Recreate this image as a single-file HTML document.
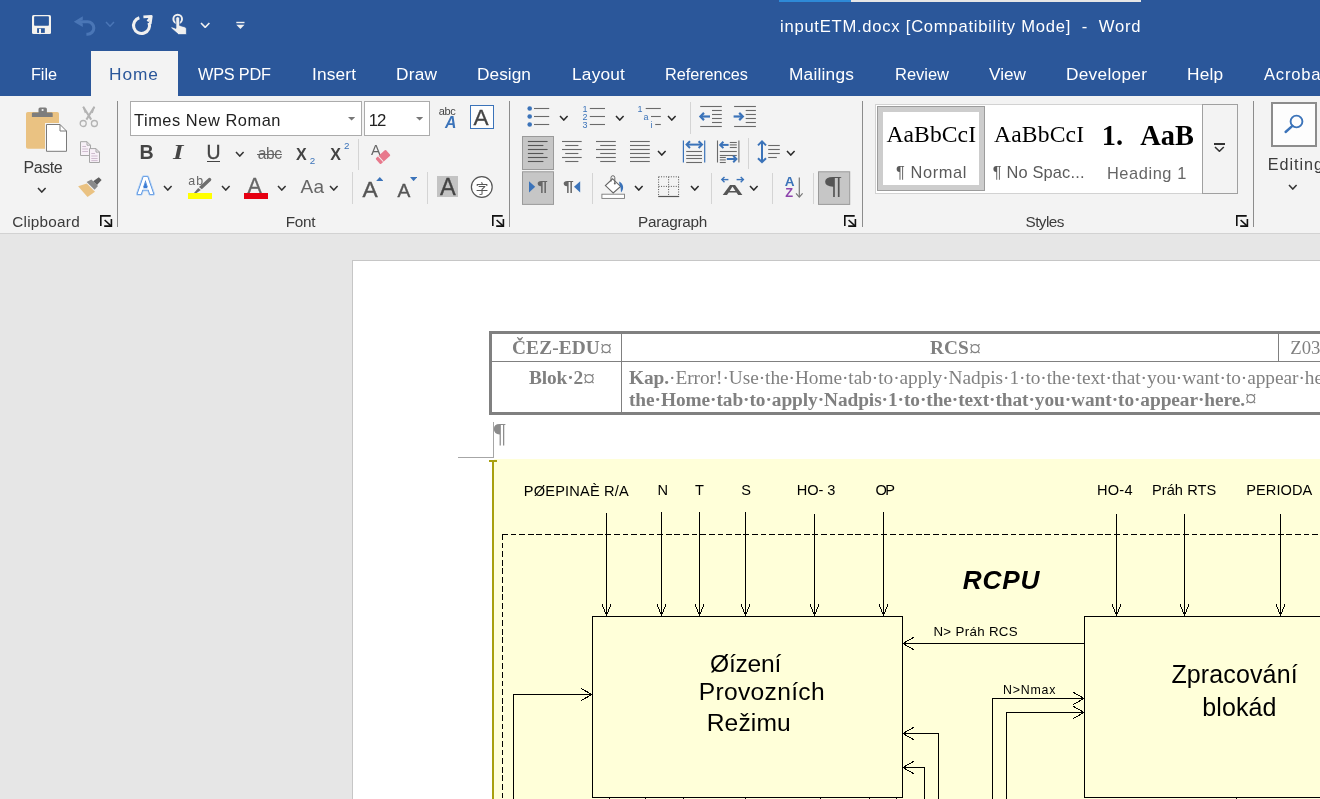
<!DOCTYPE html>
<html>
<head>
<meta charset="utf-8">
<title>inputETM.docx [Compatibility Mode] - Word</title>
<style>
*{box-sizing:border-box;margin:0;padding:0}
html,body{width:1320px;height:799px;overflow:hidden;background:#e6e6e6;font-family:"Liberation Sans",sans-serif;}
.abs{position:absolute}
#titlebar{position:absolute;left:0;top:0;width:1320px;height:96px;background:#2b579a}
#ribbon{position:absolute;left:0;top:96px;width:1320px;height:138px;background:#f3f3f3;border-bottom:1px solid #d2d2d2}
#doc{position:absolute;left:0;top:234px;width:1320px;height:565px;background:#e6e6e6;overflow:hidden}
.tab{position:absolute;top:48px;height:48px;line-height:50px;color:#fff;font-size:17.5px;white-space:nowrap;letter-spacing:-0.2px}
.glabel{position:absolute;top:212px;font-size:14.5px;color:#444;white-space:nowrap;letter-spacing:-0.1px}
.t{position:absolute;white-space:nowrap}
#page{position:absolute;left:352px;top:260px;width:980px;height:560px;background:#fff;border:1px solid #c6c6c6}
.ser{font-family:"Liberation Serif",serif}
</style>
</head>
<body>
<div id="titlebar"></div>
<div id="ribbon"></div>
<div id="doc"></div>
<div id="page"></div>
<div id="content" style="position:absolute;left:0;top:0;width:1320px;height:799px;will-change:transform">
<div class="abs" style="left:779px;top:0px;width:72px;height:2px;background:#2e8ad8;"></div>
<div class="abs" style="left:851px;top:0px;width:290px;height:2px;background:#e6e6e6;"></div>
<div class="t" style="left:780.0px;top:16px;font-size:16.6px;line-height:22px;color:#fff;letter-spacing:0.750px;white-space:pre;">inputETM.docx [Compatibility Mode]  -  Word</div>
<svg class="abs" style="left:31px;top:14px" width="22" height="22" viewBox="0 0 22 22"><rect x="1" y="0.9" width="19" height="19.2" rx="1.5" fill="#f4f2ee"/><rect x="3.1" y="2.2" width="14.8" height="9.6" rx="0.8" fill="#2b579a"/><rect x="6.1" y="14.2" width="7.7" height="4.7" fill="#2b579a"/><rect x="8" y="14.8" width="2" height="5.3" fill="#f4f2ee"/></svg>
<svg class="abs" style="left:72px;top:13px" width="26" height="24" viewBox="0 0 26 24"><path d="M10.8 3.3 L1.8 8.8 L10.8 14.1 V10.6 L6 8.8 L10.8 6.8 Z" fill="#4a76b6"/><path d="M5 8.8 H15.6 A6.2 6.2 0 0 1 15.6 21.2 H14.4" fill="none" stroke="#4a76b6" stroke-width="3.1"/></svg>
<svg class="abs" style="left:104.5px;top:21.3px" width="10" height="6.2" viewBox="0 0 10 6.2"><path d="M1 1 L5 5.2 L9 1" fill="none" stroke="#4a76b6" stroke-width="1.5"/></svg>
<svg class="abs" style="left:130px;top:13px" width="24" height="24" viewBox="0 0 24 24"><path d="M9.33 4.77 A8 8 0 1 0 19 9.6" fill="none" stroke="#f0f0f0" stroke-width="3.1"/><path d="M13.4 3.9 L21.3 3.3 L20.2 11" fill="none" stroke="#f0f0f0" stroke-width="2.7" stroke-linejoin="round"/><path d="M20.6 4 L17.6 8.4" stroke="#f0f0f0" stroke-width="2.4"/></svg>
<svg class="abs" style="left:168px;top:12px" width="22" height="25" viewBox="0 0 22 25"><circle cx="9.7" cy="7.1" r="4.3" fill="none" stroke="#f0f0f0" stroke-width="2"/><path d="M7.8 6.6 a1.9 1.9 0 0 1 3.8 0 V13.4 l5.4 1.6 a2 2 0 0 1 1.4 1.9 V22.6 H10.6 L2.8 15.8 a1.3 1.3 0 0 1 1.2 -0.9 L8 16.4 Z" fill="#f0f0f0" stroke="#2b579a" stroke-width="0.7"/></svg>
<svg class="abs" style="left:200.2px;top:21.5px" width="10.4" height="6.4" viewBox="0 0 10.4 6.4"><path d="M1 1 L5.2 5.4 L9.4 1" fill="none" stroke="#f0f0f0" stroke-width="1.6"/></svg>
<svg class="abs" style="left:236px;top:21px" width="9" height="9" viewBox="0 0 9 9"><rect x="0.3" y="0.8" width="8.2" height="1.4" fill="#f0f0f0"/><path d="M0.3 3.8 H8.5 L4.4 8 Z" fill="#f0f0f0"/></svg>
<div class="abs" style="left:91px;top:51px;width:87px;height:45px;background:#f3f3f3;"></div>
<div class="t" style="left:31.0px;top:64px;font-size:16.3px;line-height:21px;color:#fff;letter-spacing:-0.081px;">File</div>
<div class="t" style="left:109.0px;top:63px;font-size:17.3px;line-height:22px;color:#2b579a;letter-spacing:0.936px;">Home</div>
<div class="t" style="left:198.0px;top:64px;font-size:16.3px;line-height:21px;color:#fff;letter-spacing:-0.208px;">WPS PDF</div>
<div class="t" style="left:312.0px;top:63px;font-size:17.3px;line-height:22px;color:#fff;letter-spacing:0.150px;">Insert</div>
<div class="t" style="left:396.0px;top:63px;font-size:17.3px;line-height:22px;color:#fff;letter-spacing:0.202px;">Draw</div>
<div class="t" style="left:477.0px;top:63px;font-size:17.3px;line-height:22px;color:#fff;letter-spacing:0.022px;">Design</div>
<div class="t" style="left:572.0px;top:63px;font-size:17.3px;line-height:22px;color:#fff;letter-spacing:0.203px;">Layout</div>
<div class="t" style="left:665.0px;top:64px;font-size:16.3px;line-height:21px;color:#fff;letter-spacing:-0.042px;">References</div>
<div class="t" style="left:789.0px;top:63px;font-size:17.3px;line-height:22px;color:#fff;letter-spacing:0.216px;">Mailings</div>
<div class="t" style="left:895.0px;top:64px;font-size:16.5px;line-height:21px;color:#fff;letter-spacing:-0.024px;">Review</div>
<div class="t" style="left:989.0px;top:63px;font-size:17.2px;line-height:22px;color:#fff;letter-spacing:0.007px;">View</div>
<div class="t" style="left:1066.0px;top:63px;font-size:17.3px;line-height:22px;color:#fff;letter-spacing:0.264px;">Developer</div>
<div class="t" style="left:1187.0px;top:63px;font-size:17.3px;line-height:22px;color:#fff;letter-spacing:0.149px;">Help</div>
<div class="t" style="left:1264.0px;top:64px;font-size:16.6px;line-height:22px;color:#fff;letter-spacing:0.802px;">Acrobat</div>

<svg class="abs" style="left:24px;top:105px" width="46" height="50" viewBox="0 0 46 50"><rect x="2" y="6.9" width="33" height="36.9" rx="1.8" fill="#eac282"/><path d="M14.5 7.4 V4 a1.6 1.6 0 0 1 1.6 -1.6 h5.2 a1.6 1.6 0 0 1 1.6 1.6 V7.4 h4.6 a1.2 1.2 0 0 1 1.2 1.2 V12 H7.9 V8.6 a1.2 1.2 0 0 1 1.2 -1.2 Z" fill="#7d7d7d"/><circle cx="18.6" cy="5" r="1.1" fill="#f3f3f3"/><path d="M21 18 H36.6 L44 25.2 V47.6 H21 Z" fill="#f3f3f3"/><path d="M22.5 19.5 H36 L42.5 26 V46.3 H22.5 Z" fill="#fff" stroke="#7a7a7a" stroke-width="1"/><path d="M36 19.5 V26 H42.5" fill="none" stroke="#7a7a7a" stroke-width="1"/></svg>
<div class="t" style="left:23.5px;top:157px;font-size:16px;line-height:21px;color:#3b3b3b;letter-spacing:-0.445px;">Paste</div>
<svg class="abs" style="left:37.2px;top:187.2px" width="9.6" height="6.1" viewBox="0 0 9.6 6.1"><path d="M1 1 L4.8 5.1 L8.6 1" fill="none" stroke="#333" stroke-width="1.5"/></svg>
<svg class="abs" style="left:78px;top:105px" width="22" height="24" viewBox="0 0 22 24"><path d="M5.2 1.8 L13.2 14.6 M16.4 1.8 L8.4 14.6" stroke="#b3b3b3" stroke-width="2" fill="none"/><path d="M5.2 1.8 L7.4 8 M16.4 1.8 L14.2 8" stroke="#b3b3b3" stroke-width="1.2"/><circle cx="5.2" cy="18.5" r="3" fill="none" stroke="#b3b3b3" stroke-width="1.3"/><circle cx="16.4" cy="18.5" r="3" fill="none" stroke="#b3b3b3" stroke-width="1.3"/></svg>
<svg class="abs" style="left:79px;top:140px" width="22" height="24" viewBox="0 0 22 24"><path d="M1.5 1.7 H8 L11.5 5.2 V15.5 H1.5 Z" fill="#f7f0f7" stroke="#a6a6a6" stroke-width="1"/><path d="M8 1.7 V5.2 H11.5" fill="none" stroke="#a6a6a6"/><path d="M3.3 6.5 H7 M3.3 9 H9 M3.3 11.5 H9" stroke="#c9b6c9" stroke-width="0.9"/><path d="M10.5 8.6 H17 L20.5 12.1 V22.5 H10.5 Z" fill="#f7f0f7" stroke="#a6a6a6" stroke-width="1"/><path d="M17 8.6 V12.1 H20.5" fill="none" stroke="#a6a6a6"/><path d="M12.3 13.5 H16 M12.3 16 H18.6 M12.3 18.5 H18.6 M12.3 20.6 H18.6" stroke="#c9b6c9" stroke-width="0.9"/></svg>
<svg class="abs" style="left:77px;top:175px" width="26" height="24" viewBox="0 0 26 24"><path d="M1.1 11.3 L9.8 8.6 L18 16.8 L10.5 22 Z" fill="#eac282"/><path d="M9.6 7 L14.4 4.4 L21 11 L17.6 14.8 Z" fill="#8a8a8a"/><path d="M16.2 6.3 L21.8 2.2 L24.6 5 L20 9.9 Z" fill="#5f5f5f"/></svg>
<div class="t" style="left:12.3px;top:212px;font-size:15.3px;line-height:20px;color:#3b3b3b;letter-spacing:0.239px;">Clipboard</div>
<svg class="abs" style="left:100px;top:215px" width="13" height="13" viewBox="0 0 13 13"><path d="M0.8 11 V0.9 H10.7" fill="none" stroke="#111" stroke-width="1.6"/><path d="M4.2 11.1 H11.4 V4.1" fill="none" stroke="#111" stroke-width="1.6"/><path d="M4.6 5 L11 10.8" stroke="#111" stroke-width="1.6"/></svg>
<div class="abs" style="left:117px;top:101px;width:1px;height:126px;background:#8c8c8c;"></div>
<div class="abs" style="left:130px;top:101px;width:232px;height:35px;background:#fff;border:1px solid #ababab;"></div>
<div class="abs" style="left:364px;top:101px;width:66px;height:35px;background:#fff;border:1px solid #ababab;"></div>
<div class="t" style="left:134.0px;top:110px;font-size:16.4px;line-height:21px;color:#222;letter-spacing:0.548px;">Times New Roman</div>
<div class="t" style="left:368.7px;top:110px;font-size:16.8px;line-height:22px;color:#222;letter-spacing:-1.048px;">12</div>
<svg class="abs" style="left:348px;top:117.2px" width="7.2" height="3.6" viewBox="0 0 7.2 3.6"><path d="M0 0 H7.2 L3.6 3.6 Z" fill="#777"/></svg>
<svg class="abs" style="left:415.8px;top:117.2px" width="7.2" height="3.6" viewBox="0 0 7.2 3.6"><path d="M0 0 H7.2 L3.6 3.6 Z" fill="#777"/></svg>
<div class="t" style="left:438.7px;top:104px;font-size:11px;line-height:14px;color:#444;letter-spacing:0.145px;letter-spacing:-0.3px;">abc</div>
<div class="t" style="left:445.0px;top:112px;font-size:15.8px;line-height:21px;color:#3b73b9;font-weight:700;font-style:italic;">A</div>
<div class="abs" style="left:470px;top:105px;width:24px;height:24px;background:#fdfdfd;border:1px solid #3b73b9;"></div>
<div class="t" style="left:473.6px;top:103px;font-size:22.6px;line-height:29px;color:#444;-webkit-text-stroke:0.3px #444;">A</div>
<div class="t" style="left:139.4px;top:140px;font-size:19.6px;line-height:25px;color:#444;font-weight:700;">B</div>
<div class="t" style="left:172.8px;top:138px;font-size:21.5px;line-height:28px;color:#444;font-family:'Liberation Serif',serif;font-weight:700;font-style:italic;transform:scaleX(1.25);transform-origin:0 0;">I</div>
<div class="t" style="left:206.6px;top:140px;font-size:19.4px;line-height:25px;color:#444;-webkit-text-stroke:0.4px #444;">U</div>
<div class="abs" style="left:207px;top:161px;width:13.4px;height:1.2px;background:#444;"></div>
<svg class="abs" style="left:235.3px;top:151.3px" width="9.6" height="6.1" viewBox="0 0 9.6 6.1"><path d="M1 1 L4.8 5.1 L8.6 1" fill="none" stroke="#333" stroke-width="1.5"/></svg>
<div class="t" style="left:257.8px;top:144px;font-size:15.6px;line-height:20px;color:#666;letter-spacing:-0.458px;">abc</div>
<div class="abs" style="left:257.4px;top:153.8px;width:25px;height:1.1px;background:#666;"></div>
<div class="t" style="left:296.0px;top:144px;font-size:16px;line-height:21px;color:#444;font-weight:700;">X</div>
<div class="t" style="left:309.8px;top:154px;font-size:9.8px;line-height:13px;color:#3b73b9;">2</div>
<div class="t" style="left:330.2px;top:144px;font-size:16px;line-height:21px;color:#444;font-weight:700;">X</div>
<div class="t" style="left:343.9px;top:139px;font-size:9.8px;line-height:13px;color:#3b73b9;">2</div>
<div class="abs" style="left:358px;top:138.5px;width:1px;height:31px;background:#d4d4d4;"></div>
<div class="t" style="left:371.0px;top:141px;font-size:14.4px;line-height:19px;color:#666;">A</div>
<svg class="abs" style="left:374px;top:148px" width="18" height="18" viewBox="0 0 18 18"><g transform="rotate(-42 9 9)"><rect x="2.2" y="5.2" width="13.6" height="7.6" rx="1" fill="#e8798c"/><rect x="5.6" y="5.2" width="1" height="7.6" fill="#f3f3f3"/></g></svg>
<svg class="abs" style="left:132px;top:172px" width="28" height="28" viewBox="0 0 28 28"><text x="13.4" y="22.4" text-anchor="middle" font-family="Liberation Sans, sans-serif" font-weight="700" font-size="23.5" fill="none" stroke="#a9cdf5" stroke-width="3.2" stroke-linejoin="round">A</text><text x="13.4" y="22.4" text-anchor="middle" font-family="Liberation Sans, sans-serif" font-weight="700" font-size="23.5" fill="#fff" stroke="#3a7bd5" stroke-width="1.2" stroke-linejoin="round" paint-order="stroke">A</text><path d="M13.4 10.4 L15.6 16.2 H11.2 Z" fill="#3a7bd5"/></svg>
<svg class="abs" style="left:163.3px;top:185.2px" width="9.6" height="6.1" viewBox="0 0 9.6 6.1"><path d="M1 1 L4.8 5.1 L8.6 1" fill="none" stroke="#333" stroke-width="1.5"/></svg>
<div class="t" style="left:188.2px;top:173px;font-size:12.4px;line-height:16px;color:#666;letter-spacing:1.236px;">ab</div>
<svg class="abs" style="left:192px;top:176px" width="21" height="18" viewBox="0 0 21 18"><path d="M16.2 2.6 a1.7 1.7 0 0 1 2.7 2.2 L9.8 13.2 L7 11 Z" fill="#6e6e6e"/><path d="M6.2 12 L8.8 14 L4.6 16.9 H2 Z" fill="#6e6e6e"/></svg>
<div class="abs" style="left:188px;top:193px;width:24px;height:5.8px;background:#ffff00;"></div>
<svg class="abs" style="left:221.3px;top:185.2px" width="9.6" height="6.1" viewBox="0 0 9.6 6.1"><path d="M1 1 L4.8 5.1 L8.6 1" fill="none" stroke="#333" stroke-width="1.5"/></svg>
<div class="t" style="left:247.6px;top:172px;font-size:21.4px;line-height:28px;color:#666;-webkit-text-stroke:0.3px #666;">A</div>
<div class="abs" style="left:244px;top:193px;width:24px;height:5.8px;background:#e60012;"></div>
<svg class="abs" style="left:277px;top:185.2px" width="9.6" height="6.1" viewBox="0 0 9.6 6.1"><path d="M1 1 L4.8 5.1 L8.6 1" fill="none" stroke="#333" stroke-width="1.5"/></svg>
<div class="t" style="left:300.6px;top:174px;font-size:19px;line-height:25px;color:#666;letter-spacing:0.325px;">Aa</div>
<svg class="abs" style="left:329.4px;top:185.2px" width="9.6" height="6.1" viewBox="0 0 9.6 6.1"><path d="M1 1 L4.8 5.1 L8.6 1" fill="none" stroke="#333" stroke-width="1.5"/></svg>
<div class="abs" style="left:352px;top:172px;width:1px;height:32px;background:#d4d4d4;"></div>
<div class="t" style="left:362.6px;top:174px;font-size:22.8px;line-height:30px;color:#555;-webkit-text-stroke:0.4px #555;">A</div>
<svg class="abs" style="left:375.8px;top:177px" width="7.6" height="4.2" viewBox="0 0 7.6 4.2"><path d="M0 4.2 L3.8 0 L7.6 4.2 Z" fill="#3b73b9"/></svg>
<div class="t" style="left:397.4px;top:178px;font-size:19.2px;line-height:25px;color:#555;-webkit-text-stroke:0.4px #555;">A</div>
<svg class="abs" style="left:410px;top:177px" width="7.2" height="4.2" viewBox="0 0 7.2 4.2"><path d="M0 0 H7.2 L3.6 4.2 Z" fill="#3b73b9"/></svg>
<div class="abs" style="left:427px;top:172px;width:1px;height:32px;background:#d4d4d4;"></div>
<div class="abs" style="left:437px;top:176px;width:21px;height:21px;background:#c3c3c3;"></div>
<div class="t" style="left:440.0px;top:172px;font-size:23.6px;line-height:31px;color:#444;-webkit-text-stroke:0.3px #444;">A</div>
<svg class="abs" style="left:470px;top:175px" width="24" height="24" viewBox="0 0 24 24"><circle cx="11.8" cy="12" r="10.4" fill="#fff" stroke="#555" stroke-width="1.2"/></svg>
<div class="t" style="left:475.8px;top:180px;font-size:12.6px;line-height:16px;color:#555;font-family:'Noto Sans CJK SC','Liberation Sans',sans-serif;">字</div>
<div class="t" style="left:285.8px;top:212px;font-size:15.3px;line-height:20px;color:#3b3b3b;letter-spacing:-0.300px;">Font</div>
<svg class="abs" style="left:492px;top:215px" width="13" height="13" viewBox="0 0 13 13"><path d="M0.8 11 V0.9 H10.7" fill="none" stroke="#111" stroke-width="1.6"/><path d="M4.2 11.1 H11.4 V4.1" fill="none" stroke="#111" stroke-width="1.6"/><path d="M4.6 5 L11 10.8" stroke="#111" stroke-width="1.6"/></svg>
<div class="abs" style="left:509px;top:101px;width:1px;height:126px;background:#8c8c8c;"></div>
<svg class="abs" style="left:515px;top:98px" width="350" height="136" viewBox="515 98 350 136"><circle cx="529.7" cy="108.5" r="2.3" fill="#3b73b9"/><path d="M534 108.5 H549.2" stroke="#6a6a6a" stroke-width="1.1"/><circle cx="529.7" cy="116.5" r="2.3" fill="#3b73b9"/><path d="M534 116.5 H549.2" stroke="#6a6a6a" stroke-width="1.1"/><circle cx="529.7" cy="124.5" r="2.3" fill="#3b73b9"/><path d="M534 124.5 H549.2" stroke="#6a6a6a" stroke-width="1.1"/><path d="M589.8 108.5 H605" stroke="#6a6a6a" stroke-width="1.1"/><path d="M589.8 116.5 H605" stroke="#6a6a6a" stroke-width="1.1"/><path d="M589.8 124.5 H605" stroke="#6a6a6a" stroke-width="1.1"/><path d="M645.7 108.5 H660.8" stroke="#6a6a6a" stroke-width="1.1"/><path d="M651 116.5 H660.8" stroke="#6a6a6a" stroke-width="1.1"/><path d="M655.2 124.5 H660.8" stroke="#6a6a6a" stroke-width="1.1"/><path d="M700.2 106.5 H721.8" stroke="#6a6a6a" stroke-width="1.1"/><path d="M700.2 126.5 H721.8" stroke="#6a6a6a" stroke-width="1.1"/><path d="M712 110.5 H721.8" stroke="#6a6a6a" stroke-width="1.1"/><path d="M712 114.5 H721.8" stroke="#6a6a6a" stroke-width="1.1"/><path d="M712 118.5 H721.8" stroke="#6a6a6a" stroke-width="1.1"/><path d="M712 122.5 H721.8" stroke="#6a6a6a" stroke-width="1.1"/><path d="M700.6 116.5 H710" stroke="#3b73b9" stroke-width="2.2"/><path d="M704 112.9 L700.4 116.5 L704 120.1" fill="none" stroke="#3b73b9" stroke-width="2.2"/><path d="M734.1 106.5 H755.9" stroke="#6a6a6a" stroke-width="1.1"/><path d="M734.1 126.5 H755.9" stroke="#6a6a6a" stroke-width="1.1"/><path d="M745.7 110.5 H755.9" stroke="#6a6a6a" stroke-width="1.1"/><path d="M745.7 114.5 H755.9" stroke="#6a6a6a" stroke-width="1.1"/><path d="M745.7 118.5 H755.9" stroke="#6a6a6a" stroke-width="1.1"/><path d="M745.7 122.5 H755.9" stroke="#6a6a6a" stroke-width="1.1"/><path d="M733.6 116.5 H742.6" stroke="#3b73b9" stroke-width="2.2"/><path d="M739.2 112.9 L742.8 116.5 L739.2 120.1" fill="none" stroke="#3b73b9" stroke-width="2.2"/><rect x="522.5" y="136.5" width="31" height="33" fill="#c6c6c6" stroke="#9a9a9a" stroke-width="1"/><path d="M527.9 141.5 H547.6" stroke="#555" stroke-width="1.1"/><path d="M527.9 145.5 H543.4" stroke="#555" stroke-width="1.1"/><path d="M527.9 149.5 H547.6" stroke="#555" stroke-width="1.1"/><path d="M527.9 153.5 H543.4" stroke="#555" stroke-width="1.1"/><path d="M527.9 157.5 H547.6" stroke="#555" stroke-width="1.1"/><path d="M527.9 161.5 H543.4" stroke="#555" stroke-width="1.1"/><path d="M562 141.5 H581.7" stroke="#6a6a6a" stroke-width="1.1"/><path d="M565.2 145.5 H578.4" stroke="#6a6a6a" stroke-width="1.1"/><path d="M562 149.5 H581.7" stroke="#6a6a6a" stroke-width="1.1"/><path d="M565.2 153.5 H578.4" stroke="#6a6a6a" stroke-width="1.1"/><path d="M562 157.5 H581.7" stroke="#6a6a6a" stroke-width="1.1"/><path d="M565.2 161.5 H578.4" stroke="#6a6a6a" stroke-width="1.1"/><path d="M596 141.5 H615.8" stroke="#6a6a6a" stroke-width="1.1"/><path d="M600.2 145.5 H615.8" stroke="#6a6a6a" stroke-width="1.1"/><path d="M596 149.5 H615.8" stroke="#6a6a6a" stroke-width="1.1"/><path d="M600.2 153.5 H615.8" stroke="#6a6a6a" stroke-width="1.1"/><path d="M596 157.5 H615.8" stroke="#6a6a6a" stroke-width="1.1"/><path d="M600.2 161.5 H615.8" stroke="#6a6a6a" stroke-width="1.1"/><path d="M630 141.5 H649.8" stroke="#6a6a6a" stroke-width="1.1"/><path d="M630 145.5 H649.8" stroke="#6a6a6a" stroke-width="1.1"/><path d="M630 149.5 H649.8" stroke="#6a6a6a" stroke-width="1.1"/><path d="M630 153.5 H649.8" stroke="#6a6a6a" stroke-width="1.1"/><path d="M630 157.5 H649.8" stroke="#6a6a6a" stroke-width="1.1"/><path d="M630 161.5 H649.8" stroke="#6a6a6a" stroke-width="1.1"/><path d="M683.4 140.6 V162.6 M704.7 140.6 V162.6" stroke="#3b73b9" stroke-width="1.2"/><path d="M687 144.6 H701.6" stroke="#3b73b9" stroke-width="2"/><path d="M690 141.2 L686.6 144.6 L690 148 M698.6 141.2 L702 144.6 L698.6 148" fill="none" stroke="#3b73b9" stroke-width="2"/><path d="M686.2 151.5 H702" stroke="#6a6a6a" stroke-width="1.1"/><path d="M686.2 155.5 H702" stroke="#6a6a6a" stroke-width="1.1"/><path d="M686.2 158.5 H702" stroke="#6a6a6a" stroke-width="1.1"/><path d="M686.2 162.5 H702" stroke="#6a6a6a" stroke-width="1.1"/><path d="M717.5 140.6 V162.6 M738.9 140.6 V162.6" stroke="#6a6a6a" stroke-width="1.1"/><path d="M720.4 144.9 H728.6" stroke="#3b73b9" stroke-width="2"/><path d="M723.4 141.7 L720.2 144.9 L723.4 148.1" fill="none" stroke="#3b73b9" stroke-width="2"/><path d="M729.8 142.5 H736.8" stroke="#6a6a6a" stroke-width="1.1"/><path d="M729.8 144.9 H736.8" stroke="#6a6a6a" stroke-width="1.1"/><path d="M729.8 147.5 H736.8" stroke="#6a6a6a" stroke-width="1.1"/><path d="M719.8 151.5 H736.8" stroke="#6a6a6a" stroke-width="1.1"/><path d="M719.8 155.5 H736.8" stroke="#6a6a6a" stroke-width="1.1"/><path d="M719.8 157.5 H725.8" stroke="#6a6a6a" stroke-width="1.1"/><path d="M719.8 159.9 H725.8" stroke="#6a6a6a" stroke-width="1.1"/><path d="M719.8 162.5 H725.8" stroke="#6a6a6a" stroke-width="1.1"/><path d="M726.8 159 H736.2" stroke="#3b73b9" stroke-width="2"/><path d="M733.2 155.8 L736.4 159 L733.2 162.2" fill="none" stroke="#3b73b9" stroke-width="2"/><path d="M762 141.6 V162" stroke="#3b73b9" stroke-width="2"/><path d="M758 145.4 L762 141.4 L766 145.4 M758 158.2 L762 162.2 L766 158.2" fill="none" stroke="#3b73b9" stroke-width="2"/><path d="M768.2 145.5 H779.8" stroke="#6a6a6a" stroke-width="1.1"/><path d="M768.2 149.5 H779.8" stroke="#6a6a6a" stroke-width="1.1"/><path d="M768.2 153.5 H779.8" stroke="#6a6a6a" stroke-width="1.1"/><path d="M768.2 157.5 H776.8" stroke="#6a6a6a" stroke-width="1.1"/><rect x="522.5" y="171.8" width="31" height="32.6" fill="#c6c6c6" stroke="#9a9a9a" stroke-width="1"/><path d="M529 181.2 L535.2 186.8 L529 192.4 Z" fill="#3b73b9"/><path d="M574 186.8 L580.2 181.2 V192.4 Z" fill="#3b73b9"/><rect x="601.9" y="194.2" width="22.6" height="4.2" fill="#fff" stroke="#7a7a7a" stroke-width="0.9"/><path d="M612.6 178.8 L620.6 186.4 L613.2 193 L605.4 185.6 Z" fill="#fff" stroke="#666" stroke-width="1.1"/><path d="M611 181.6 V177.6 a1.9 1.9 0 0 1 3.8 0 V183.4" fill="none" stroke="#666" stroke-width="1"/><circle cx="614.8" cy="183.6" r="1" fill="#666"/><path d="M619.2 181.4 C624 184 624.2 189 621 192.4 C620.6 189.4 621 186.6 619.4 184.6 Z" fill="#3b73b9"/><path d="M658.6 176.8 H678.8 M658.6 186.4 H678.8 M658.6 176.8 V196 M668.6 176.8 V196 M678.6 176.8 V196" stroke="#555" stroke-width="1" stroke-dasharray="1 1.45" fill="none"/><path d="M658.2 196.5 H679.2" stroke="#555" stroke-width="1.2"/><path d="M722 179.6 H728.4" stroke="#3b73b9" stroke-width="1.4"/><path d="M724.5 176.9 L721.8 179.6 L724.5 182.3" fill="none" stroke="#3b73b9" stroke-width="1.4"/><path d="M736.6 179.6 H743.2" stroke="#3b73b9" stroke-width="1.4"/><path d="M740.7 176.9 L743.4 179.6 L740.7 182.3" fill="none" stroke="#3b73b9" stroke-width="1.4"/><path d="M799.3 177.4 V197" stroke="#777" stroke-width="1.2"/><path d="M796 193.4 L799.3 197.2 L802.6 193.4" fill="none" stroke="#777" stroke-width="1.2"/><rect x="818.5" y="171.8" width="31.2" height="32.6" fill="#c6c6c6" stroke="#9a9a9a" stroke-width="1"/></svg>
<div class="t" style="left:582.6px;top:103px;font-size:9px;line-height:12px;color:#3b73b9;">1</div>
<div class="t" style="left:582.6px;top:111px;font-size:9px;line-height:12px;color:#3b73b9;">2</div>
<div class="t" style="left:582.6px;top:119px;font-size:9px;line-height:12px;color:#3b73b9;">3</div>
<div class="t" style="left:637.6px;top:103px;font-size:9px;line-height:12px;color:#3b73b9;">1</div>
<div class="t" style="left:643.6px;top:111px;font-size:9px;line-height:12px;color:#3b73b9;">a</div>
<div class="t" style="left:650.4px;top:119px;font-size:9px;line-height:12px;color:#3b73b9;">i</div>
<svg class="abs" style="left:559px;top:115.2px" width="9.6" height="6.1" viewBox="0 0 9.6 6.1"><path d="M1 1 L4.8 5.1 L8.6 1" fill="none" stroke="#2a2a2a" stroke-width="1.5"/></svg>
<svg class="abs" style="left:615px;top:115.2px" width="9.6" height="6.1" viewBox="0 0 9.6 6.1"><path d="M1 1 L4.8 5.1 L8.6 1" fill="none" stroke="#2a2a2a" stroke-width="1.5"/></svg>
<svg class="abs" style="left:667px;top:115.2px" width="9.6" height="6.1" viewBox="0 0 9.6 6.1"><path d="M1 1 L4.8 5.1 L8.6 1" fill="none" stroke="#2a2a2a" stroke-width="1.5"/></svg>
<div class="abs" style="left:690px;top:102px;width:1px;height:32px;background:#d4d4d4;"></div>
<svg class="abs" style="left:657.4px;top:150.2px" width="9.6" height="6.1" viewBox="0 0 9.6 6.1"><path d="M1 1 L4.8 5.1 L8.6 1" fill="none" stroke="#2a2a2a" stroke-width="1.5"/></svg>
<div class="abs" style="left:748px;top:137.5px;width:1px;height:31px;background:#d4d4d4;"></div>
<svg class="abs" style="left:786px;top:150.4px" width="9.6" height="6.1" viewBox="0 0 9.6 6.1"><path d="M1 1 L4.8 5.1 L8.6 1" fill="none" stroke="#2a2a2a" stroke-width="1.5"/></svg>
<div class="t" style="left:537.4px;top:177px;font-size:13.9px;line-height:18px;color:#666;font-weight:700;transform:scaleX(1.4);transform-origin:0 0;">¶</div>
<div class="t" style="left:563.2px;top:177px;font-size:13.9px;line-height:18px;color:#666;font-weight:700;transform:scaleX(1.4);transform-origin:0 0;">¶</div>
<div class="abs" style="left:592px;top:172.5px;width:1px;height:31.5px;background:#d4d4d4;"></div>
<svg class="abs" style="left:634px;top:185.3px" width="9.6" height="6.1" viewBox="0 0 9.6 6.1"><path d="M1 1 L4.8 5.1 L8.6 1" fill="none" stroke="#2a2a2a" stroke-width="1.5"/></svg>
<svg class="abs" style="left:690px;top:185.3px" width="9.6" height="6.1" viewBox="0 0 9.6 6.1"><path d="M1 1 L4.8 5.1 L8.6 1" fill="none" stroke="#2a2a2a" stroke-width="1.5"/></svg>
<div class="abs" style="left:711px;top:172.5px;width:1px;height:31.5px;background:#d4d4d4;"></div>
<div class="t" style="left:721.5px;top:181px;font-size:14.8px;line-height:19px;color:#555;font-weight:700;transform:scaleX(1.98);transform-origin:0 0;">A</div>
<svg class="abs" style="left:749.3px;top:185.3px" width="9.6" height="6.1" viewBox="0 0 9.6 6.1"><path d="M1 1 L4.8 5.1 L8.6 1" fill="none" stroke="#2a2a2a" stroke-width="1.5"/></svg>
<div class="abs" style="left:772px;top:172.5px;width:1px;height:31.5px;background:#d4d4d4;"></div>
<div class="t" style="left:784.7px;top:173px;font-size:13.6px;line-height:18px;color:#3b73b9;font-weight:700;">A</div>
<div class="t" style="left:785.2px;top:184px;font-size:12.8px;line-height:17px;color:#8e44ad;font-weight:700;">Z</div>
<div class="abs" style="left:813px;top:172.5px;width:1px;height:31.5px;background:#d4d4d4;"></div>
<div class="t" style="left:824.8px;top:170px;font-size:24.5px;line-height:32px;color:#555;font-family:'Liberation Serif',serif;transform:scaleX(1.5);transform-origin:0 0;">¶</div>
<div class="t" style="left:638.0px;top:212px;font-size:15.3px;line-height:20px;color:#3b3b3b;letter-spacing:-0.281px;">Paragraph</div>
<svg class="abs" style="left:844.2px;top:215px" width="13" height="13" viewBox="0 0 13 13"><path d="M0.8 11 V0.9 H10.7" fill="none" stroke="#111" stroke-width="1.6"/><path d="M4.2 11.1 H11.4 V4.1" fill="none" stroke="#111" stroke-width="1.6"/><path d="M4.6 5 L11 10.8" stroke="#111" stroke-width="1.6"/></svg>
<div class="abs" style="left:861.5px;top:101px;width:1px;height:126px;background:#8c8c8c;"></div>
<div class="abs" style="left:875px;top:104px;width:328px;height:90px;background:#fff;border:1px solid #d2d2d2;"></div>
<div class="abs" style="left:877px;top:106px;width:108px;height:85px;background:#fff;border:1px solid #9c9c9c;box-shadow:inset 0 0 0 5px #cdcdcd;"></div>
<div class="t" style="left:886.4px;top:119px;font-size:23.6px;line-height:31px;color:#000;font-family:'Liberation Serif',serif;letter-spacing:0.085px;">AaBbCcI</div>
<div class="t" style="left:896.0px;top:162px;font-size:16.4px;line-height:21px;color:#5a5a5a;letter-spacing:0.606px;">¶ Normal</div>
<div class="t" style="left:994.0px;top:119px;font-size:23.6px;line-height:31px;color:#000;font-family:'Liberation Serif',serif;letter-spacing:0.152px;">AaBbCcI</div>
<div class="t" style="left:992.8px;top:162px;font-size:16.4px;line-height:21px;color:#5a5a5a;letter-spacing:0.159px;">¶ No Spac...</div>
<div class="abs" style="left:1100px;top:108px;width:92.8px;height:50px;overflow:hidden"><div class="t" style="left:1.8px;top:9px;font-size:28.4px;line-height:37px;color:#000;font-family:'Liberation Serif',serif;font-weight:700;">1.</div>
<div class="t" style="left:40.2px;top:9px;font-size:28.4px;line-height:37px;color:#000;font-family:'Liberation Serif',serif;font-weight:700;">AaBb</div>
</div><div class="t" style="left:1106.9px;top:163px;font-size:16.4px;line-height:21px;color:#666;letter-spacing:0.590px;">Heading 1</div>
<div class="abs" style="left:1202px;top:104px;width:36px;height:90px;background:#f3f3f3;border:1px solid #a0a0a0;"></div>
<div class="abs" style="left:1214px;top:143px;width:10.6px;height:1.5px;background:#333;"></div>
<svg class="abs" style="left:1213.8px;top:146px" width="10.8" height="6.3" viewBox="0 0 10.8 6.3"><path d="M1 1 L5.4 5.3 L9.8 1" fill="none" stroke="#333" stroke-width="1.5"/></svg>
<div class="t" style="left:1025.5px;top:212px;font-size:15.3px;line-height:20px;color:#3b3b3b;letter-spacing:-0.539px;">Styles</div>
<svg class="abs" style="left:1236px;top:215px" width="13" height="13" viewBox="0 0 13 13"><path d="M0.8 11 V0.9 H10.7" fill="none" stroke="#111" stroke-width="1.6"/><path d="M4.2 11.1 H11.4 V4.1" fill="none" stroke="#111" stroke-width="1.6"/><path d="M4.6 5 L11 10.8" stroke="#111" stroke-width="1.6"/></svg>
<div class="abs" style="left:1253px;top:101px;width:1px;height:126px;background:#8c8c8c;"></div>
<div class="abs" style="left:1271px;top:102px;width:46px;height:45px;background:#fdfdfd;border:2px solid #8c8c8c;"></div>
<svg class="abs" style="left:1282px;top:110px" width="24" height="26" viewBox="0 0 24 26"><circle cx="14.5" cy="11.5" r="5.9" fill="none" stroke="#3b73b9" stroke-width="1.9"/><path d="M10.4 15.8 L3.6 22" stroke="#3b73b9" stroke-width="2.4" stroke-linecap="round"/></svg>
<div class="t" style="left:1267.7px;top:154px;font-size:16.2px;line-height:21px;color:#3b3b3b;letter-spacing:0.971px;">Editing</div>
<svg class="abs" style="left:1288.2px;top:184px" width="9.6" height="6.1" viewBox="0 0 9.6 6.1"><path d="M1 1 L4.8 5.1 L8.6 1" fill="none" stroke="#333" stroke-width="1.5"/></svg>

<div class="abs" style="left:489px;top:331px;width:900px;height:84px;border:3px solid #808080;border-right:0"></div>
<div class="abs" style="left:492px;top:361px;width:840px;height:1px;background:#808080;"></div>
<div class="abs" style="left:621px;top:334px;width:1px;height:78px;background:#808080;"></div>
<div class="abs" style="left:1278px;top:334px;width:1px;height:27px;background:#808080;"></div>
<div class="t" style="left:511.8px;top:336px;font-size:18.7px;line-height:24px;color:#808080;font-family:'Liberation Serif',serif;font-weight:700;letter-spacing:0.128px;transform:scaleX(1.035);transform-origin:0 0;">ČEZ-EDU<span style="font-weight:400;font-size:1.25em;line-height:0;letter-spacing:0;position:relative;top:1.5px">¤</span></div>
<div class="t" style="left:930.2px;top:336px;font-size:18.7px;line-height:24px;color:#808080;font-family:'Liberation Serif',serif;font-weight:700;letter-spacing:0.069px;transform:scaleX(1.035);transform-origin:0 0;">RCS<span style="font-weight:400;font-size:1.25em;line-height:0;letter-spacing:0;position:relative;top:1.5px">¤</span></div>
<div class="t" style="left:1290.3px;top:336px;font-size:18.7px;line-height:24px;color:#808080;font-family:'Liberation Serif',serif;">Z03</div>
<div class="t" style="left:529.0px;top:366px;font-size:18.7px;line-height:24px;color:#808080;font-family:'Liberation Serif',serif;font-weight:700;letter-spacing:-0.136px;transform:scaleX(1.035);transform-origin:0 0;">Blok·2<span style="font-weight:400;font-size:1.25em;line-height:0;letter-spacing:0;position:relative;top:1.5px">¤</span></div>
<div class="t ser" style="left:628.5px;top:366px;font-size:18.7px;line-height:24px;color:#808080;letter-spacing:-0.054px;transform:scaleX(1.035);transform-origin:0 0"><b>Kap.</b>·Error!·Use·the·Home·tab·to·apply·Nadpis·1·to·the·text·that·you·want·to·appear·here.·<b>Error!·Use·</b></div>
<div class="t ser" style="left:628.5px;top:388px;font-size:18.7px;line-height:24px;color:#808080;letter-spacing:-0.072px;transform:scaleX(1.035);transform-origin:0 0"><b>the·Home·tab·to·apply·Nadpis·1·to·the·text·that·you·want·to·appear·here.<span style="font-weight:400;font-size:1.2em;line-height:0;letter-spacing:0">¤</span></b></div>
<div class="abs" style="left:493px;top:422px;width:1px;height:36px;background:#a6a6a6;"></div>
<div class="abs" style="left:458px;top:457px;width:36px;height:1px;background:#a6a6a6;"></div>
<div class="t" style="left:493.7px;top:416px;font-size:26.5px;line-height:34px;color:#8c8c8c;font-family:'Liberation Serif',serif;">¶</div>
<div class="abs" style="left:494px;top:459px;width:830px;height:345px;background:#ffffd9;"></div>
<div class="abs" style="left:492px;top:460px;width:2px;height:345px;background:#a8a010;"></div>
<div class="abs" style="left:489px;top:460px;width:8px;height:2px;background:#a8a010;"></div>
<svg class="abs" style="left:480px;top:500px" width="840" height="299" viewBox="480 500 840 299" shape-rendering="crispEdges"><path d="M502 534.5 H1320 M502.5 534 V799" fill="none" stroke="#000" stroke-width="1" stroke-dasharray="5.8 2.82"/><path d="M592.5 616.5 H902.5 V797.5 H592.5 Z" fill="none" stroke="#000" stroke-width="1"/><path d="M1330 616.5 H1084.5 V797.5 H1330" fill="none" stroke="#000" stroke-width="1"/><path d="M606.5 513 V616 M601.7 603.5 L606.5 615.5 L611.3 603.5" fill="none" stroke="#000" stroke-width="1"/><path d="M661.5 512 V616 M656.7 603.5 L661.5 615.5 L666.3 603.5" fill="none" stroke="#000" stroke-width="1"/><path d="M699.5 512 V616 M694.7 603.5 L699.5 615.5 L704.3 603.5" fill="none" stroke="#000" stroke-width="1"/><path d="M745.5 512 V616 M740.7 603.5 L745.5 615.5 L750.3 603.5" fill="none" stroke="#000" stroke-width="1"/><path d="M814.5 514 V616 M809.7 603.5 L814.5 615.5 L819.3 603.5" fill="none" stroke="#000" stroke-width="1"/><path d="M883.5 512 V616 M878.7 603.5 L883.5 615.5 L888.3 603.5" fill="none" stroke="#000" stroke-width="1"/><path d="M1116.5 514 V616 M1111.7 603.5 L1116.5 615.5 L1121.3 603.5" fill="none" stroke="#000" stroke-width="1"/><path d="M1184.5 514 V616 M1179.7 603.5 L1184.5 615.5 L1189.3 603.5" fill="none" stroke="#000" stroke-width="1"/><path d="M1280.5 514 V616 M1275.7 603.5 L1280.5 615.5 L1285.3 603.5" fill="none" stroke="#000" stroke-width="1"/><path d="M513.5 799 V694.5 H592 M581 688.5 L592 694.5 L581 700.5" fill="none" stroke="#000" stroke-width="1"/><path d="M609.5 798 V800" fill="none" stroke="#000" stroke-width="1"/><path d="M645.5 798 V800" fill="none" stroke="#000" stroke-width="1"/><path d="M683.5 798 V800" fill="none" stroke="#000" stroke-width="1"/><path d="M745.5 798 V800" fill="none" stroke="#000" stroke-width="1"/><path d="M820.5 798 V800" fill="none" stroke="#000" stroke-width="1"/><path d="M869.5 798 V800" fill="none" stroke="#000" stroke-width="1"/><path d="M896.5 798 V800" fill="none" stroke="#000" stroke-width="1"/><path d="M1236.5 798 V800" fill="none" stroke="#000" stroke-width="1"/><path d="M1084.5 643.5 H903 M914 637.2 L903 643.5 L914 649.8" fill="none" stroke="#000" stroke-width="1"/><path d="M992.5 799 V698.5 H1084 M1073 692.2 L1084 698.5 L1073 704.8" fill="none" stroke="#000" stroke-width="1"/><path d="M1006.5 799 V712.5 H1084 M1073 706.2 L1084 712.5 L1073 718.8" fill="none" stroke="#000" stroke-width="1"/><path d="M938.5 799 V733.5 H903 M914 727.2 L903 733.5 L914 739.8" fill="none" stroke="#000" stroke-width="1"/><path d="M924.5 799 V767.5 H903 M914 761.2 L903 767.5 L914 773.8" fill="none" stroke="#000" stroke-width="1"/></svg>
<div class="t" style="left:523.8px;top:482px;font-size:14.6px;line-height:19px;color:#000;letter-spacing:0.184px;">PØEPINAÈ R/A</div>
<div class="t" style="left:657.6px;top:481px;font-size:14.6px;line-height:19px;color:#000;">N</div>
<div class="t" style="left:695.0px;top:481px;font-size:14.6px;line-height:19px;color:#000;">T</div>
<div class="t" style="left:741.3px;top:481px;font-size:14.6px;line-height:19px;color:#000;">S</div>
<div class="t" style="left:796.7px;top:481px;font-size:14.6px;line-height:19px;color:#000;letter-spacing:-0.077px;">HO- 3</div>
<div class="t" style="left:875.4px;top:481px;font-size:14.6px;line-height:19px;color:#000;letter-spacing:-1.397px;">OP</div>
<div class="t" style="left:1097.0px;top:481px;font-size:14.6px;line-height:19px;color:#000;letter-spacing:0.235px;">HO-4</div>
<div class="t" style="left:1151.9px;top:481px;font-size:14.6px;line-height:19px;color:#000;letter-spacing:0.071px;">Práh RTS</div>
<div class="t" style="left:1246.3px;top:481px;font-size:14.6px;line-height:19px;color:#000;letter-spacing:0.055px;">PERIODA</div>
<div class="t" style="left:962.7px;top:563px;font-size:26.2px;line-height:34px;color:#000;font-weight:700;font-style:italic;letter-spacing:0.833px;">RCPU</div>
<div class="t" style="left:710.0px;top:648px;font-size:24.6px;line-height:32px;color:#000;letter-spacing:-0.229px;">Øízení</div>
<div class="t" style="left:698.7px;top:676px;font-size:24.6px;line-height:32px;color:#000;letter-spacing:0.320px;">Provozních</div>
<div class="t" style="left:706.7px;top:707px;font-size:24.6px;line-height:32px;color:#000;letter-spacing:0.141px;">Režimu</div>
<div class="t" style="left:933.4px;top:623px;font-size:13.3px;line-height:17px;color:#000;letter-spacing:0.337px;">N&gt; Práh RCS</div>
<div class="t" style="left:1003.4px;top:681px;font-size:13.3px;line-height:17px;color:#000;letter-spacing:0.863px;transform:scaleX(0.93);transform-origin:0 0;">N&gt;Nmax</div>
<div class="t" style="left:1171.4px;top:658px;font-size:25px;line-height:32px;color:#000;letter-spacing:0.131px;">Zpracování</div>
<div class="t" style="left:1202.3px;top:691px;font-size:25px;line-height:32px;color:#000;letter-spacing:0.095px;">blokád</div>

</div>
</body>
</html>
